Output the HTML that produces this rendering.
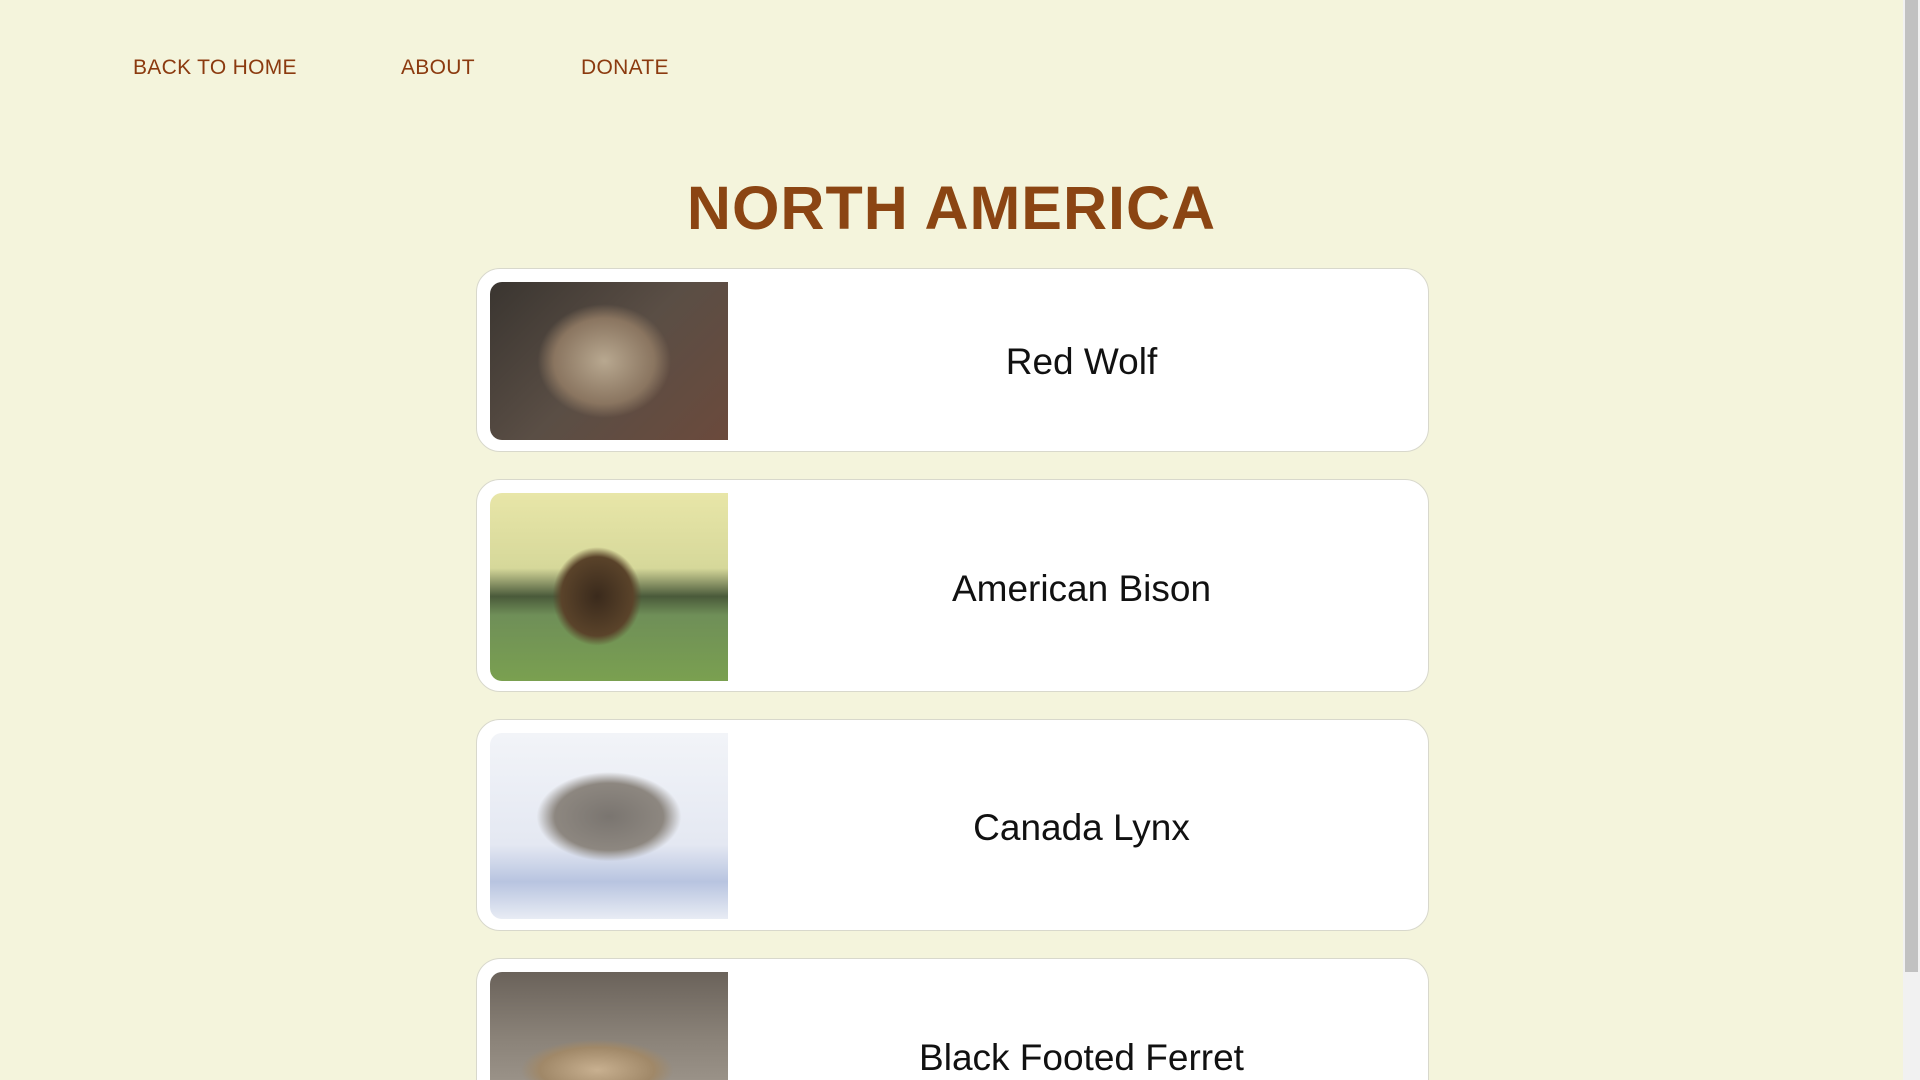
<!DOCTYPE html>
<html><head><meta charset="utf-8"><style>
html,body{margin:0;padding:0;width:1920px;height:1080px;overflow:hidden;background:#f4f4dc;font-family:"Liberation Sans",sans-serif;}
.page{position:absolute;left:0;top:0;width:1903px;height:1080px;overflow:hidden;}
.nav a{position:absolute;top:56px;font-size:21px;color:#8b3a0f;text-decoration:none;letter-spacing:0.3px}
h1{position:absolute;top:172px;left:0;width:1903px;margin:0;text-align:center;font-size:61px;font-weight:bold;color:#8b4513;letter-spacing:1px;line-height:72px}
.card{position:absolute;left:476px;width:953px;background:#fff;border:1px solid #d8d8cc;border-radius:24px;box-sizing:border-box;}
.img{position:absolute;left:13px;width:238px;border-radius:12px 0 0 12px;}
.t{position:absolute;left:258px;right:0;text-align:center;font-size:37px;color:#111;}
.sb{position:absolute;right:0;top:0;width:17px;height:1080px;background:#f1f1f1}
.th{position:absolute;right:2px;top:0;width:13px;height:972px;background:#c1c1c1}
</style></head><body><div class="page">
<div class="nav"><a style="left:133px">BACK TO HOME</a><a style="left:401px">ABOUT</a><a style="left:581px">DONATE</a></div>
<h1>NORTH AMERICA</h1>
<div class="card" style="top:268px;height:184px"><div class="img" style="top:13px;height:158px;background:radial-gradient(ellipse 35% 45% at 48% 50%,#b8a890,#8a7560 60%,transparent 80%),linear-gradient(135deg,#3a3530,#5a4e45 50%,#6b4a3c)"></div><div class="t" style="top:72px">Red Wolf</div></div>
<div class="card" style="top:479px;height:213px"><div class="img" style="top:13px;height:188px;background:radial-gradient(ellipse 25% 35% at 45% 55%,#3a2a1c,#5a432a 60%,transparent 75%),linear-gradient(180deg,#e8e6a8 0%,#d6d89a 40%,#4a5a3a 55%,#6f8f58 65%,#7aa050 100%)"></div><div class="t" style="top:88px">American Bison</div></div>
<div class="card" style="top:719px;height:212px"><div class="img" style="top:13px;height:186px;background:radial-gradient(ellipse 38% 30% at 50% 45%,#7a7570,#8d8780 60%,transparent 80%),linear-gradient(180deg,#f2f4f8,#e4e8f2 60%,#b8c4e0 80%,#e8ecf4)"></div><div class="t" style="top:87px">Canada Lynx</div></div>
<div class="card" style="top:958px;height:122px;border-bottom:none;border-radius:24px 24px 0 0;overflow:hidden"><div class="img" style="top:13px;height:109px;border-radius:12px 0 0 0;background:radial-gradient(ellipse 40% 35% at 45% 90%,#c8b090,#a08868 60%,transparent 80%),linear-gradient(180deg,#6a625a,#8a8278 60%,#9a9288)"></div><div class="t" style="top:78px">Black Footed Ferret</div></div>
</div>
<div class="sb"><div class="th"></div></div>
</body></html>
